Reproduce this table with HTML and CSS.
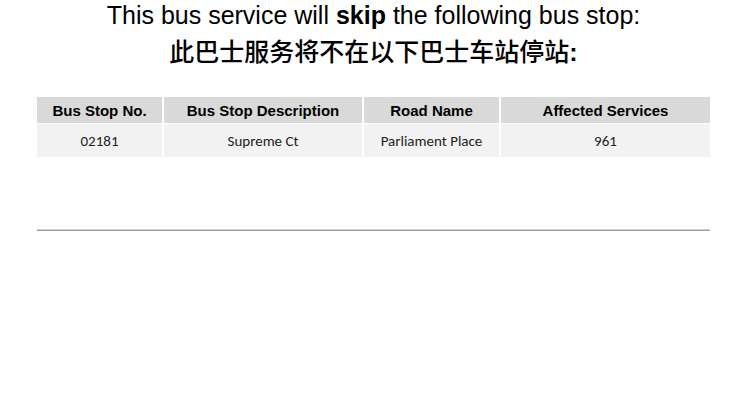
FILE: index.html
```html
<!DOCTYPE html>
<html lang="en">

<head>
  <title>Bus Service Advisory</title>
  <meta charset="UTF-8">
  <meta name="viewport" content="width=device-width, initial-scale=1">
  <link rel="stylesheet" href="styles.css">
</head>

<body>
  <div class="notice">
    <h1 class="notice-en">This bus service will <b>skip</b> the following bus stop:</h1>
    <h2 class="notice-zh">此巴士服务将不在以下巴士车站停站<b>:</b></h2>

    <table class="stops">
      <colgroup>
        <col class="c-no">
        <col class="c-desc">
        <col class="c-road">
        <col class="c-svc">
      </colgroup>
      <thead>
        <tr>
          <th>Bus Stop No.</th>
          <th>Bus Stop Description</th>
          <th>Road Name</th>
          <th>Affected Services</th>
        </tr>
      </thead>
      <tbody>
        <tr>
          <td>02181</td>
          <td>Supreme Ct</td>
          <td>Parliament Place</td>
          <td>961</td>
        </tr>
      </tbody>
    </table>

    <hr class="divider">
  </div>
</body>

</html>
```

FILE: styles.css
```css
* {
  box-sizing: border-box;
}

/* Page */
body {
  margin: 0;
  background-color: #fff;
  font-family: "Liberation Sans", Arial, sans-serif;
  color: #000;
}

.notice {
  padding: 0 36px 0 37px;
}

/* Headings */
.notice-en {
  margin: 1px 0 0;
  font-size: 25px;
  font-weight: normal;
  line-height: 28px;
  text-align: center;
}

.notice-zh {
  margin: 8px 0 0;
  font-family: "Liberation Sans", "Noto Sans CJK SC", sans-serif;
  font-size: 25px;
  font-weight: 500;
  line-height: 30px;
  text-align: center;
}

.notice-zh b {
  font-weight: bold;
}

/* Table */
.stops {
  width: calc(100% + 4px);
  margin: 29px -2px 0;
  border-collapse: separate;
  border-spacing: 2px 1px;
  table-layout: fixed;
}

.c-no {
  width: 125px;
}

.c-desc {
  width: 198px;
}

.c-road {
  width: 135px;
}

.stops th {
  height: 26px;
  padding: 0 4px;
  background-color: #d9d9d9;
  font-size: 15px;
  font-weight: bold;
  text-align: center;
}

.stops td {
  height: 33px;
  padding: 0 4px;
  background-color: #f2f2f2;
  font-family: Carlito, "Open Sans", sans-serif;
  font-size: 15px;
  text-align: center;
  color: #222;
}

/* Divider */
.divider {
  margin: 71px 0 0;
  height: 2px;
  border: 0;
  border-top: 1px solid #d4d4d4;
  border-bottom: 1px solid #9a9a9a;
}
```
